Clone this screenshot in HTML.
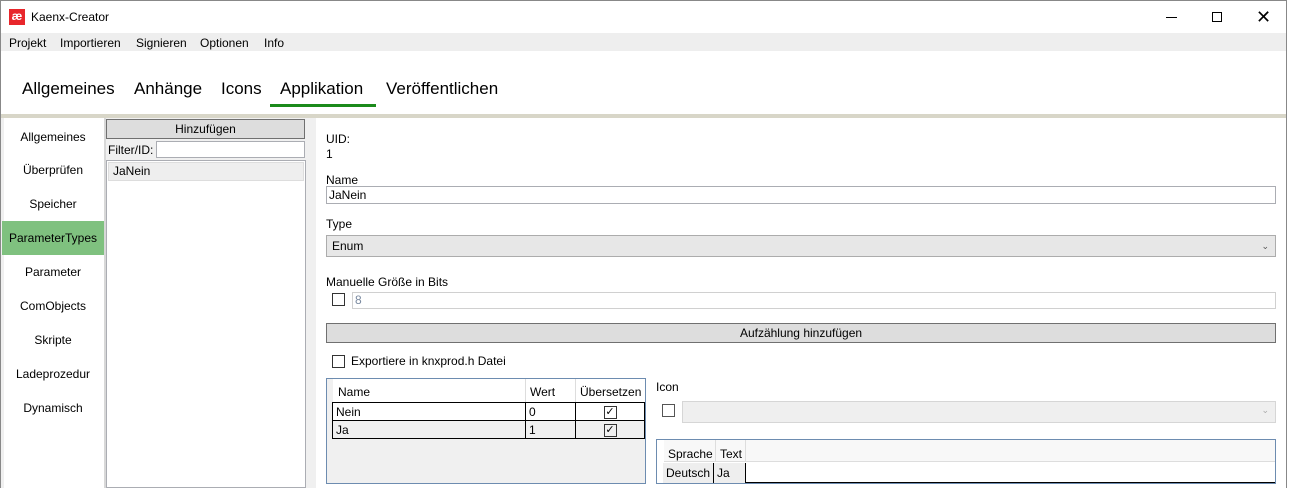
<!DOCTYPE html>
<html><head><meta charset="utf-8"><style>
*{box-sizing:border-box;margin:0;padding:0}
body{width:1292px;height:488px;overflow:hidden;background:#fff;font-family:"Liberation Sans",sans-serif;font-size:12px;color:#000;position:relative}
.a{position:absolute}
.win{left:0;top:0;width:1287px;height:488px;border:1px solid #888;border-bottom:none;background:#fff}
.nav{width:102px;text-align:center;height:34px;line-height:34px;left:2px}
.inp{border:1px solid #abadb3;background:#fff}
.cb{width:13px;height:13px;border:1px solid #333;background:#fff}
td{border:1px solid #000;padding:0 3px;height:18px}
.tab{font-size:17px;top:79px}
</style></head><body>
<div class="a win"></div>
<div class="a" style="left:9px;top:9px;width:16px;height:16px;background:#e8262b;color:#fff;font-weight:bold;font-size:12px;line-height:15px;text-align:center">æ</div>
<div class="a" style="left:31px;top:10px;font-size:12px">Kaenx-Creator</div>
<div class="a" style="left:1166px;top:17px;width:11px;height:1px;background:#000"></div>
<div class="a" style="left:1212px;top:12px;width:10px;height:10px;border:1px solid #000"></div>
<div class="a" style="left:1256px;top:6px;font-size:18px;line-height:22px">✕</div>
<div class="a" style="left:1px;top:33px;width:1285px;height:18px;background:#eeeeee"></div>
<div class="a" style="left:9px;top:36px">Projekt</div>
<div class="a" style="left:60px;top:36px">Importieren</div>
<div class="a" style="left:136px;top:36px">Signieren</div>
<div class="a" style="left:200px;top:36px">Optionen</div>
<div class="a" style="left:264px;top:36px">Info</div>
<div class="a tab" style="left:22px">Allgemeines</div>
<div class="a tab" style="left:134px">Anhänge</div>
<div class="a tab" style="left:221px">Icons</div>
<div class="a tab" style="left:280px">Applikation</div>
<div class="a tab" style="left:386px">Veröffentlichen</div>
<div class="a" style="left:270px;top:104px;width:106px;height:3px;background:#1b8a1b"></div>
<div class="a" style="left:1px;top:114px;width:1285px;height:4px;background:#d8d6c8"></div>
<div class="a" style="left:1px;top:118px;width:3px;height:370px;background:#f0f0f0"></div>
<div class="a" style="left:104px;top:118px;width:2px;height:370px;background:#d8d8d8"></div>
<div class="a nav" style="top:120px">Allgemeines</div>
<div class="a nav" style="top:153px">Überprüfen</div>
<div class="a nav" style="top:187px">Speicher</div>
<div class="a nav" style="top:221px;background:#7fc17f;height:34px">ParameterTypes</div>
<div class="a nav" style="top:255px">Parameter</div>
<div class="a nav" style="top:289px">ComObjects</div>
<div class="a nav" style="top:323px">Skripte</div>
<div class="a nav" style="top:357px">Ladeprozedur</div>
<div class="a nav" style="top:391px">Dynamisch</div>
<div class="a" style="left:106px;top:118px;width:210px;height:370px;background:#f0f0f0"></div>
<div class="a" style="left:106px;top:119px;width:199px;height:20px;background:#dddddd;border:1px solid #707070;text-align:center;line-height:18px">Hinzufügen</div>
<div class="a" style="left:108px;top:143px">Filter/ID:</div>
<div class="a inp" style="left:156px;top:141px;width:149px;height:17px"></div>
<div class="a" style="left:106px;top:160px;width:200px;height:328px;background:#fff;border:1px solid #abadb3"></div>
<div class="a" style="left:108px;top:162px;width:196px;height:19px;background:#eeeeee;border:1px solid #ddd;padding-left:4px;line-height:17px">JaNein</div>
<div class="a" style="left:316px;top:118px;width:970px;height:370px;background:#fff"></div>
<div class="a" style="left:326px;top:132px">UID:</div>
<div class="a" style="left:326px;top:147px">1</div>
<div class="a" style="left:326px;top:173px">Name</div>
<div class="a inp" style="left:326px;top:186px;width:950px;height:18px;padding-left:2px;line-height:16px">JaNein</div>
<div class="a" style="left:326px;top:217px">Type</div>
<div class="a" style="left:326px;top:235px;width:950px;height:22px;background:#e7e7e7;border:1px solid #acacac;padding-left:5px;line-height:20px">Enum<span style="position:absolute;right:6px;font-size:9px;color:#555">⌄</span></div>
<div class="a" style="left:326px;top:275px">Manuelle Größe in Bits</div>
<div class="a cb" style="left:332px;top:293px"></div>
<div class="a" style="left:352px;top:292px;width:924px;height:17px;border:1px solid #d0d0d0;color:#7a8aa0;padding-left:2px;line-height:15px">8</div>
<div class="a" style="left:326px;top:323px;width:950px;height:20px;background:#dddddd;border:1px solid #707070;text-align:center;line-height:18px">Aufzählung hinzufügen</div>
<div class="a cb" style="left:332px;top:355px"></div>
<div class="a" style="left:351px;top:354px">Exportiere in knxprod.h Datei</div>
<div class="a" style="left:326px;top:378px;width:320px;height:106px;background:#f0f0f0;border:1px solid #6d8cb0"></div>
<div class="a" style="left:333px;top:379px;width:312px;height:23px;background:#fff"></div>
<div class="a" style="left:338px;top:385px">Name</div>
<div class="a" style="left:525px;top:379px;width:1px;height:23px;background:#ddd"></div>
<div class="a" style="left:530px;top:385px">Wert</div>
<div class="a" style="left:575px;top:379px;width:1px;height:23px;background:#ddd"></div>
<div class="a" style="left:580px;top:385px">Übersetzen</div>
<table class="a" style="left:332px;top:402px;border-collapse:collapse;width:313px">
<tr style="background:#fff"><td style="width:193px">Nein</td><td style="width:50px">0</td><td style="text-align:center"><span style="display:inline-block;width:13px;height:13px;border:1px solid #333;font-size:11px;line-height:11px">✓</span></td></tr>
<tr style="background:#f0f0f0"><td>Ja</td><td>1</td><td style="text-align:center"><span style="display:inline-block;width:13px;height:13px;border:1px solid #333;font-size:11px;line-height:11px">✓</span></td></tr>
</table>
<div class="a" style="left:656px;top:380px">Icon</div>
<div class="a cb" style="left:662px;top:404px;border-color:#555"></div>
<div class="a" style="left:682px;top:401px;width:594px;height:22px;background:#efefef;border:1px solid #d6d6d6"><span style="position:absolute;right:6px;top:3px;font-size:9px;color:#aaa">⌄</span></div>
<div class="a" style="left:656px;top:439px;width:620px;height:45px;border:1px solid #6d8cb0;background:#fff"></div>
<div class="a" style="left:664px;top:440px;width:611px;height:22px;background:#f8f8f8;border-bottom:1px solid #ddd"></div>
<div class="a" style="left:668px;top:447px">Sprache</div>
<div class="a" style="left:715px;top:440px;width:1px;height:22px;background:#ddd"></div>
<div class="a" style="left:720px;top:447px">Text</div>
<div class="a" style="left:745px;top:440px;width:1px;height:22px;background:#ddd"></div>
<div class="a" style="left:663px;top:463px;width:612px;height:20px;border-bottom:1px solid #000"></div>
<div class="a" style="left:663px;top:463px;width:51px;height:20px;background:#eee;border-right:1px solid #000;padding-left:3px;line-height:20px">Deutsch</div>
<div class="a" style="left:714px;top:463px;width:32px;height:20px;background:#eee;border-right:1px solid #000;padding-left:3px;line-height:20px">Ja</div>
</body></html>
